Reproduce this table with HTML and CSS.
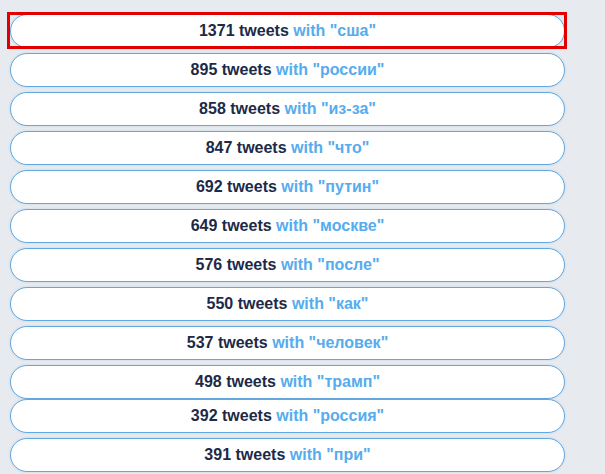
FILE: index.html
```html
<!DOCTYPE html>
<html>
<head>
<meta charset="utf-8">
<link rel="stylesheet" href="styles.css">
</head>
<body>
<div class="list">
  <div class="pill selected"><span class="label"><span class="count">1371 tweets</span> <span class="word">with "сша"</span></span></div>
  <div class="pill"><span class="label"><span class="count">895 tweets</span> <span class="word">with "россии"</span></span></div>
  <div class="pill"><span class="label"><span class="count">858 tweets</span> <span class="word">with "из-за"</span></span></div>
  <div class="pill"><span class="label"><span class="count">847 tweets</span> <span class="word">with "что"</span></span></div>
  <div class="pill"><span class="label"><span class="count">692 tweets</span> <span class="word">with "путин"</span></span></div>
  <div class="pill"><span class="label"><span class="count">649 tweets</span> <span class="word">with "москве"</span></span></div>
  <div class="pill"><span class="label"><span class="count">576 tweets</span> <span class="word">with "после"</span></span></div>
  <div class="pill"><span class="label"><span class="count">550 tweets</span> <span class="word">with "как"</span></span></div>
  <div class="pill"><span class="label"><span class="count">537 tweets</span> <span class="word">with "человек"</span></span></div>
  <div class="pill tight"><span class="label"><span class="count">498 tweets</span> <span class="word">with "трамп"</span></span></div>
  <div class="pill"><span class="label"><span class="count">392 tweets</span> <span class="word">with "россия"</span></span></div>
  <div class="pill"><span class="label"><span class="count">391 tweets</span> <span class="word">with "при"</span></span></div>
</div>
</body>
</html>
```

FILE: styles.css
```css
html, body {
  margin: 0;
  padding: 0;
  background: #e7eaee;
  height: 100%;
  overflow: hidden;
}
.list {
  display: flex;
  flex-direction: column;
  gap: 5px;
  width: 555px;
  padding: 14px 0 0 10px;
}
.pill {
  position: relative;
  box-sizing: border-box;
  height: 34px;
  border: 1px solid #64a8e0;
  border-radius: 17px;
  background: #ffffff;
  box-shadow: 0 0 2px rgba(100, 168, 224, 0.35);
  display: flex;
  align-items: center;
  justify-content: center;
  font-family: "Liberation Sans", Arial, sans-serif;
  font-weight: bold;
  font-size: 16px;
}
.label {
  white-space: pre;
}
.pill.tight {
  margin-bottom: -5px;
}
.pill.selected::after {
  content: "";
  position: absolute;
  top: -3px;
  left: -4px;
  right: -3px;
  bottom: -2px;
  border: 3px solid #e00000;
}
.count {
  color: #1c2a48;
}
.word {
  color: #55acee;
}
```
